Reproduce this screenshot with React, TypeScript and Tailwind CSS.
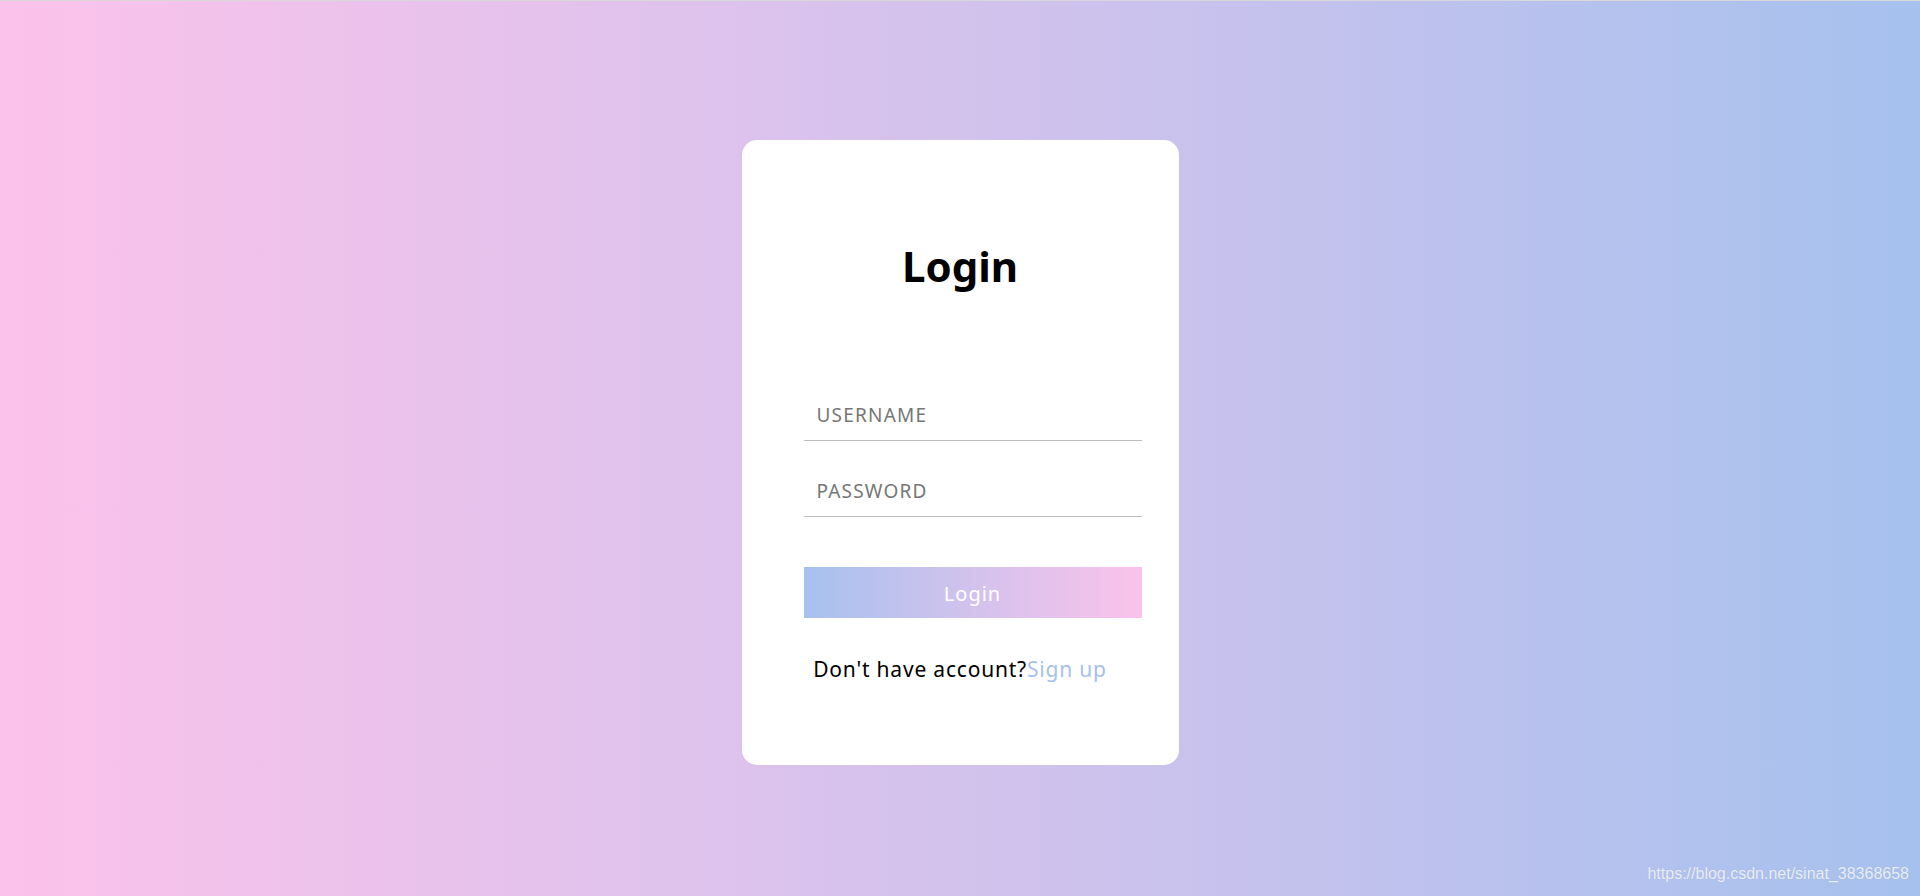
import { useState } from 'react';

const FONT = { fontFamily: '"Noto Sans", "Open Sans", sans-serif' };

export default function App() {
  const [username, setUsername] = useState('');
  const [password, setPassword] = useState('');

  return (
    <div
      className="relative h-screen w-full overflow-hidden border-t border-[#d8d8d8] bg-gradient-to-r from-[#fbc2eb] to-[#a6c1ee]"
      style={FONT}
    >
      <div className="flex justify-center pt-[139px]">
        <div className="flex h-[625px] w-[437px] flex-col rounded-[15px] bg-white">
          <h1 className="mt-[101px] text-center text-[42px] font-bold leading-[50px] text-black">Login</h1>

          <div className="ml-[62px] mt-[109px] flex w-[338px] flex-col gap-[35px]">
            <input
              className="h-[41px] w-full border-b border-[#bcbcbc] pb-[10px] pl-[13px] text-[19px] leading-[30px] tracking-[1.2px] text-gray-700 outline-none placeholder:text-[#767676]"
              placeholder="USERNAME"
              value={username}
              onChange={e => setUsername(e.target.value)}
            />
            <input
              type="password"
              className="h-[41px] w-full border-b border-[#bcbcbc] pb-[10px] pl-[13px] text-[19px] leading-[30px] tracking-[1.2px] text-gray-700 outline-none placeholder:text-[#767676]"
              placeholder="PASSWORD"
              value={password}
              onChange={e => setPassword(e.target.value)}
            />

            <button className="mt-[15px] h-[51px] w-full bg-gradient-to-r from-[#a6c1ee] to-[#fbc2eb] pt-[2px] text-[20px] tracking-[1px] text-white">
              Login
            </button>
          </div>

          <p className="mt-[36px] text-center text-[21px] leading-[30px] tracking-[0.8px] text-black">
            Don't have account?<a className="cursor-pointer text-[#a6c1ee]">Sign up</a>
          </p>
        </div>
      </div>

      <span
        className="absolute bottom-[10px] right-[11px] text-[16px] text-white/80"
        style={{ fontFamily: '"Liberation Sans", Arial, sans-serif', textShadow: '0 0 1px rgba(0,0,0,0.15)' }}
      >
        https://blog.csdn.net/sinat_38368658
      </span>
    </div>
  );
}
